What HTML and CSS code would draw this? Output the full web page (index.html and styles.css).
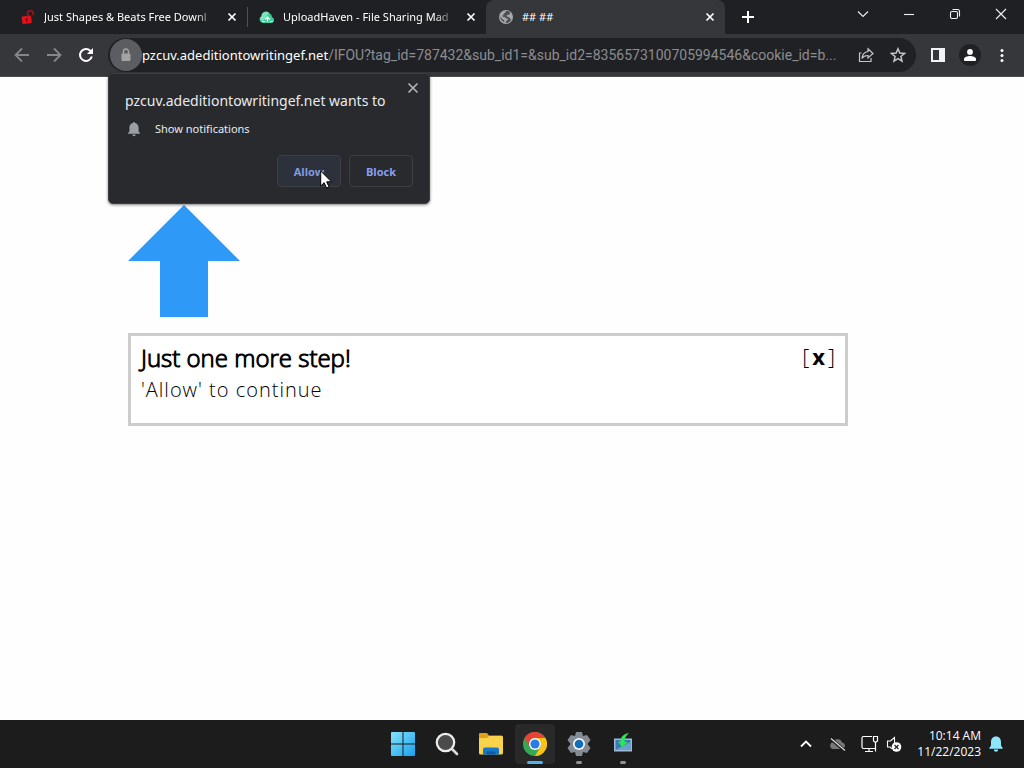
FILE: index.html
```html
<!DOCTYPE html>
<html lang="en">
<head>
<meta charset="utf-8">
<title>## ##</title>
<link rel="stylesheet" href="styles.css">
</head>
<body>
<header class="browser">
  <div class="tabstrip">
    <div class="tab">
      <svg class="favicon" viewBox="0 0 16 16"><g transform="rotate(-8 7 11)"><rect x="2" y="7" width="9.500" height="7.500" rx="1" fill="#e3101b"/><path d="M8.500 8V5a2.700 2.700 0 0 1 5.400 0v2" fill="none" stroke="#a5131b" stroke-width="1.600"/><circle cx="6.700" cy="10.200" r="1.100" fill="#5d070b"/><path d="M6.700 10v2.700" stroke="#5d070b"/></g></svg>
      <span class="tab-title tab-title-faded">Just Shapes &amp; Beats Free Downl</span>
      <button class="tab-close" aria-label="Close tab"><svg viewBox="0 0 16 16"><path d="M4.500 4.500l7 7M11.500 4.500l-7 7"/></svg></button>
    </div>
    <div class="tab tab-divided">
      <svg class="favicon" viewBox="0 0 16 16"><path d="M3.800 14A3.600 3.600 0 0 1 2.500 7.200 4.500 4.500 0 0 1 10.500 4.200 4.300 4.300 0 0 1 13 8 3.200 3.200 0 0 1 13 14Z" fill="#3ecb98"/><path d="M1 10.500a4 4 0 0 1 1.500-3.300A4.500 4.500 0 0 1 10 4L4 12Z" fill="#7fe3bd"/><path d="M8.500 13V8.500M6.200 10.500l2.300-2.500 2.300 2.500M3 12.500h3M11 12.500h3" stroke="#e6fff5" stroke-width="1.200" fill="none"/></svg>
      <span class="tab-title tab-title-faded">UploadHaven - File Sharing Mad</span>
      <button class="tab-close" aria-label="Close tab"><svg viewBox="0 0 16 16"><path d="M4.500 4.500l7 7M11.500 4.500l-7 7"/></svg></button>
    </div>
    <div class="tab tab-active">
      <svg class="favicon" viewBox="0 0 16 16"><circle cx="8" cy="8" r="7" fill="#a6a8ab"/><path d="M9 1.800c-2 .5-1 2-2.600 2.400C5 4.600 6.200 6 4.800 6.500 3.500 7 4.500 8 6 8c2 0 1.400 1.500 3 1.500 1.200 0 1 1.500-.2 2-1 .5-.5 2-1.400 2.600 3 .3 5.200-1.700 6-4-.8.400-1.400-.3-1.700-1.200-.4-1.400-2.500-.4-3-1.600-.4-1.200 1.200-1.400 2.500-1.700.9-.3.400-1.500 1-2.100C11.300 2.500 10.200 1.900 9 1.800ZM2.200 7.500c.1 2.700 1.800 5 4 5.500.5-1.500-.3-2.100-1.300-2.500C3.500 10 3.600 8.200 2.200 7.500Z" fill="#4c4e51"/></svg>
      <span class="tab-title">## ##</span>
      <button class="tab-close" aria-label="Close tab"><svg viewBox="0 0 16 16"><path d="M4.500 4.500l7 7M11.500 4.500l-7 7"/></svg></button>
    </div>
    <button class="new-tab" aria-label="New tab"><svg viewBox="0 0 16 16"><path d="M8 2v12M2 8h12"/></svg></button>
    <div class="window-controls">
      <button aria-label="Search tabs"><svg viewBox="0 0 16 16"><path d="M3 5.500l5 5 5-5"/></svg></button>
      <button aria-label="Minimize"><svg viewBox="0 0 16 16"><path d="M3 8.500h10"/></svg></button>
      <button aria-label="Restore"><svg viewBox="0 0 16 16"><rect x="3.500" y="5.500" width="7" height="7" rx="1.500"/><path d="M5.500 3.500h5a2 2 0 0 1 2 2v5"/></svg></button>
      <button aria-label="Close"><svg viewBox="0 0 16 16"><path d="M3 3l10 10M13 3L3 13"/></svg></button>
    </div>
  </div>
  <div class="toolbar">
    <button class="nav nav-dim" aria-label="Back"><svg viewBox="0 0 16 16"><path d="M15 8H2M8 1.500L1.500 8 8 14.500"/></svg></button>
    <button class="nav nav-dim" aria-label="Forward"><svg viewBox="0 0 16 16"><path d="M1 8h13M8 1.500L14.500 8 8 14.500"/></svg></button>
    <button class="nav" aria-label="Reload"><svg viewBox="0 0 16 16"><path d="M13.800 9.500A6 6 0 1 1 12.200 3.700L14 5.500" stroke-width="2"/><path d="M15 1v6H9Z" fill="currentColor" stroke="none"/></svg></button>
    <div class="omnibox">
      <button class="site-info" aria-label="View site information"><svg viewBox="0 0 16 16"><rect x="3.500" y="6.500" width="9" height="7.500" rx="1"/><path d="M5.500 7V4.500a2.500 2.500 0 0 1 5 0V7" fill="none" stroke="#a2a3a5" stroke-width="1.500"/></svg></button>
      <a class="url" href="#"><span class="host">pzcuv.adeditiontowritingef.net</span><span class="query">/IFOU?tag_id=787432&amp;sub_id1=&amp;sub_id2=8356573100705994546&amp;cookie_id=b...</span></a>
      <button class="omni-action" aria-label="Share"><svg viewBox="0 0 16 16"><path d="M3.500 6H1.500v8.500h11.500V11M10 1.800L15 6.500l-5 4.500V8.500C7.500 8.400 5.500 9.200 4 11.500 4.400 7.500 6.500 5 10 4.500Z" stroke-width="1.200"/></svg></button>
      <button class="omni-action" aria-label="Bookmark this tab"><svg viewBox="0 0 16 16"><path d="M8 1.800l1.800 4.300 4.700.4-3.600 3 1.100 4.600L8 11.700l-4 2.400 1.100-4.600-3.600-3 4.700-.4Z" stroke-width="1.500"/></svg></button>
    </div>
    <button class="side" aria-label="Side panel"><svg viewBox="0 0 16 16"><path d="M1 1h14v14H1ZM3 3v10h6V3Z" fill="#f1f3f4" fill-rule="evenodd"/></svg></button>
    <button class="side profile" aria-label="Profile"><svg viewBox="0 0 16 16"><circle cx="8" cy="4.900" r="2.900" fill="#fff"/><path d="M2 14v-2c0-2 3.500-3 6-3s6 1 6 3v2Z" fill="#fff"/></svg></button>
    <button class="side" aria-label="Menu"><svg viewBox="0 0 16 16"><g fill="#fff"><circle cx="8" cy="3.500" r="1.500"/><circle cx="8" cy="8.500" r="1.500"/><circle cx="8" cy="13.500" r="1.500"/></g></svg></button>
  </div>
  <section class="prompt" role="dialog" aria-labelledby="prompt-title">
    <button class="prompt-close" aria-label="Close"><svg viewBox="0 0 16 16"><path d="M3.500 3.500l9 9M12.500 3.500l-9 9"/></svg></button>
    <h2 id="prompt-title">pzcuv.adeditiontowritingef.net wants to</h2>
    <p class="permission"><svg viewBox="0 0 16 16"><path d="M7 2a1 1 0 0 1 2 0c2.300.5 3.600 2.300 3.600 4.800v3.700L14 12v.8H2V12l1.400-1.500V6.800C3.400 4.300 4.700 2.500 7 2ZM6.300 13.600h3.400a1.700 1.700 0 0 1-3.400 0Z" fill="#9aa0a6"/></svg>Show notifications</p>
    <div class="prompt-actions">
      <button class="allow">Allow</button>
      <button>Block</button>
    </div>
    <svg class="cursor" viewBox="0 0 12 19"><path d="M.7 1v15l3.500-3.300 2.300 5.300 2.500-1.100-2.300-5.100h4.800Z" fill="#fff" stroke="#000" stroke-width="1"/></svg>
  </section>
</header>

<main class="page">
  <svg class="arrow" viewBox="0 0 112 112"><path d="M56 0l56 56H80v56H32V56H0Z" fill="#2f99f8"/></svg>
  <section class="notice">
    <div class="notice-text">
      <h1>Just one more step!</h1>
      <p>'Allow' to continue</p>
    </div>
    <button class="dismiss">[<b>x</b>]</button>
  </section>
</main>

<footer class="taskbar">
  <nav class="apps">
    <button aria-label="Start"><svg viewBox="0 0 24 24"><defs><linearGradient id="win" x1="0" y1="0" x2="24" y2="24" gradientUnits="userSpaceOnUse"><stop stop-color="#86e3fb"/><stop offset="1" stop-color="#16a1ee"/></linearGradient></defs><path d="M0 1q0-1 1-1h10.500v11.500H0ZM12.500 0H23q1 0 1 1v10.500H12.500ZM0 12.500h11.500V24H1q-1 0-1-1ZM12.500 12.500H24V23q0 1-1 1H12.500Z" fill="url(#win)"/></svg></button>
    <button aria-label="Search"><svg viewBox="0 0 24 24"><circle cx="10.500" cy="10.500" r="8.700" fill="#4b4b4b" stroke="#eee" stroke-width="2.200"/><path d="M17 17l5 5" stroke="#ddd" stroke-width="2.600" stroke-linecap="round"/></svg></button>
    <button aria-label="File Explorer"><svg viewBox="0 0 24 24"><path d="M0 2q0-1 1-1h7l2 2.500h12.500Q24 3.500 24 5v5H0Z" fill="#dfa019"/><path d="M0 6h8l2-2h12.500Q24 4 24 5.500V21q0 1.500-1.500 1.500h-21Q0 22.500 0 21Z" fill="#fbd24b"/><path d="M4 22.500v-5q0-2 2-2h12q2 0 2 2v5Z" fill="#1477ca"/><path d="M7.500 22.500v-2q0-1 1-1h7q1 0 1 1v2Z" fill="#0c5ba4"/></svg></button>
    <button class="app-current app-running" aria-label="Google Chrome"><svg viewBox="0 0 24 24"><circle cx="12" cy="12" r="12" fill="#34a853"/><path d="M1.600 6A12 12 0 0 1 22.400 6H12a6 6 0 0 0-5.200 9Z" fill="#ea4335"/><path d="M22.400 6A12 12 0 0 1 12 24l5.200-9a6 6 0 0 0 0-6L12 6Z" fill="#fbc116"/><circle cx="12" cy="12" r="6" fill="#fff"/><circle cx="12" cy="12" r="4.600" fill="#287be8"/></svg></button>
    <button class="app-running" aria-label="Settings"><svg viewBox="0 0 24 24"><path d="M9 0h6l1 4 4-1 3.500 5-3 4 3 4-3.500 5-4-1-1 4H9l-1-4-4 1-3.500-5 3-4-3-4L4 3l4 1Z" fill="#858b92"/><circle cx="12" cy="12" r="6" fill="#f2f7fb"/><circle cx="12" cy="12" r="4.300" fill="#126db8"/></svg></button>
    <button class="app-running" aria-label="Connection"><svg viewBox="0 0 24 24"><path d="M3 6.500h18v13H3Z" fill="#9dbbd6"/><path d="M4.500 8h15v10h-15Z" fill="#3c7ab5"/><path d="M4.500 18l15-8v8Z" fill="#6fa0cd"/><path d="M18 1C11.500 2 9.500 6 9.500 9.500H7l4 5.500 5.500-4.500-3-.7C13.500 6 15 3.500 18 1Z" fill="#2de657"/></svg></button>
  </nav>
  <div class="tray">
    <button aria-label="Show hidden icons"><svg viewBox="0 0 18 18"><path d="M4 11.500L9 6.500l5 5" fill="none" stroke="#fff" stroke-width="1.800"/></svg></button>
    <button aria-label="OneDrive"><svg viewBox="0 0 18 18"><path d="M4 14a3.400 3.400 0 0 1 0-6.700A4.800 4.800 0 0 1 13 7.500 3.400 3.400 0 0 1 14 14Z" fill="#777"/><path d="M1.500 3.500l14 12" stroke="#1c1c1c" stroke-width="3"/><path d="M2 3.500l14 12" stroke="#ddd" stroke-width="1.200"/></svg></button>
    <div class="tray-group">
      <button aria-label="Network"><svg viewBox="0 0 18 18"><path d="M11 1.500H2.500Q1 1.500 1 3v9q0 1.500 1.500 1.500H15M8 13.500v3M4 16.500h8M12.500 1.500h4V6l-2 1.500-2-1.500ZM14.500 7.500v9" fill="none" stroke="#fff" stroke-width="1.200"/></svg></button>
      <button aria-label="Volume"><svg viewBox="0 0 18 18"><path d="M9.500 8V2.500L5.500 6H2.500v6H5l2 1.800" fill="none" stroke="#fff" stroke-width="1.100"/><circle cx="11.500" cy="12" r="4.800" fill="#fff"/><path d="M9.500 10l4 4M13.500 10l-4 4" stroke="#222" stroke-width="1.200"/></svg></button>
    </div>
    <div class="tray-group">
      <div class="clock"><time>10:14 AM</time><time>11/22/2023</time></div>
      <button aria-label="Notifications"><svg viewBox="0 0 18 18"><path d="M9 1.500c-3.500 0-5 2.600-5 5.500v3.500L2.300 13v.8h13.400V13L14 10.500V7c0-2.900-1.500-5.500-5-5.500ZM6.800 14.600h4.400a2.200 2.200 0 0 1-4.400 0Z" fill="#8ee6fa"/></svg></button>
    </div>
  </div>
</footer>
</body>
</html>
```
FILE: styles.css
```css
* {
  box-sizing: border-box;
}

body {
  margin: 0;
  min-height: 100vh;
  display: flex;
  flex-direction: column;
  background: #fefefe;
  font-family: "Open Sans", "Noto Sans", sans-serif;
  font-size: 12px;
  color: #000;
}

button {
  display: flex;
  align-items: center;
  justify-content: center;
  flex: none;
  margin: 0;
  padding: 0;
  border: 0;
  background: none;
  color: inherit;
  font: inherit;
}

h1, h2, p {
  margin: 0;
}

svg {
  display: block;
  flex: none;
}

.browser {
  position: relative;
  color: #fff;
}

.tabstrip {
  display: flex;
  height: 34px;
  padding-left: 8px;
  background: #1f2023;
}

.tab {
  position: relative;
  display: flex;
  align-items: center;
  flex: 0 1 239px;
  min-width: 0;
  gap: 8px;
  padding: 0 7px 0 12px;
}

.tab-divided::before {
  content: "";
  position: absolute;
  left: 0;
  top: 7px;
  height: 20px;
  border-left: 1px solid #505155;
}

.tab-active {
  background: #36373a;
  border-radius: 8px 8px 0 0;
}

.favicon {
  width: 16px;
  height: 16px;
}

.tab-title {
  flex: 1;
  min-width: 0;
  overflow: hidden;
  white-space: nowrap;
  font-family: "Noto Sans", sans-serif;
  font-size: 11px;
  line-height: 18px;
}

.tab-title-faded {
  mask-image: linear-gradient(to right, #000 88%, transparent);
}

.tab-close svg {
  width: 16px;
  height: 16px;
  stroke: #fff;
  stroke-width: 1.7;
}

.new-tab {
  width: 46px;
}

.new-tab svg {
  width: 16px;
  height: 16px;
  stroke: #fff;
  stroke-width: 2;
}

.window-controls {
  display: flex;
  margin-left: auto;
  align-items: center;
  height: 28px;
}

.window-controls button {
  width: 46px;
  height: 28px;
}

.window-controls svg {
  width: 16px;
  height: 16px;
  fill: none;
  stroke: #f1f1f1;
  stroke-width: 1.1;
}

.toolbar {
  display: flex;
  align-items: center;
  height: 43px;
  padding: 0 6px;
  background: #36373a;
  border-bottom: 1px solid #4b4c4e;
}

.nav {
  width: 32px;
  height: 32px;
}

.nav svg {
  width: 16px;
  height: 16px;
  fill: none;
  stroke: currentColor;
  stroke-width: 1.8;
}

.nav-dim {
  color: #85868a;
}

.omnibox {
  display: flex;
  align-items: center;
  flex: 1;
  min-width: 0;
  height: 34px;
  margin: 0 6px;
  padding: 0 2px;
  border-radius: 17px;
  background: #202124;
}

.site-info {
  width: 32px;
  height: 32px;
  border-radius: 50%;
  background: #5c5d60;
}

.site-info svg {
  width: 16px;
  height: 16px;
  fill: #a2a3a5;
}

.url {
  flex: 1;
  min-width: 0;
  overflow: hidden;
  white-space: nowrap;
  text-overflow: ellipsis;
  text-decoration: none;
  color: #8c8d90;
  line-height: 20px;
}

.host {
  color: #fff;
  font-family: "Noto Sans", sans-serif;
  font-size: 13px;
}

.query {
  font-family: Roboto, "Open Sans", sans-serif;
  font-size: 14px;
}

.omni-action {
  width: 32px;
  height: 32px;
}

.omni-action svg {
  width: 16px;
  height: 16px;
  fill: none;
  stroke: #c4c5c8;
}

.side {
  width: 32px;
  height: 32px;
}

.side svg {
  width: 16px;
  height: 16px;
}

.profile svg {
  width: 22px;
  height: 22px;
  padding: 3px;
  border-radius: 50%;
  background: #202124;
}

.prompt {
  position: absolute;
  top: 73px;
  left: 108px;
  width: 322px;
  padding: 16px;
  border: 1px solid #3c3d40;
  border-radius: 5px;
  background: #292a2d;
  box-shadow: 0 1px 3px rgba(0, 0, 0, 0.5);
  color: #e8eaed;
}

.prompt h2 {
  font-family: "Noto Sans", sans-serif;
  font-size: 14px;
  font-weight: 400;
  line-height: 22px;
}

.prompt-close {
  position: absolute;
  top: 6px;
  right: 8px;
}

.prompt-close svg {
  width: 16px;
  height: 16px;
  stroke: #b0b2b5;
  stroke-width: 1.7;
}

.permission {
  display: flex;
  align-items: center;
  gap: 13px;
  margin-top: 8px;
  padding-left: 1px;
  font-family: "Noto Sans", sans-serif;
  font-size: 11px;
  line-height: 18px;
}

.permission svg {
  width: 16px;
  height: 16px;
}

.prompt-actions {
  display: flex;
  justify-content: flex-end;
  gap: 8px;
  margin-top: 17px;
}

.prompt-actions button {
  width: 64px;
  height: 32px;
  border: 1px solid #3c3f44;
  border-radius: 4px;
  color: #8c9ef0;
  font-size: 11px;
  font-weight: 700;
}

.prompt-actions .allow {
  background: #2c313b;
  color: #839bdf;
}

.cursor {
  position: absolute;
  left: 211px;
  top: 96px;
  width: 12px;
  height: 19px;
}

.page {
  flex: 1;
  width: 100%;
  max-width: 976px;
  padding: 128px 128px 32px;
}

.arrow {
  width: 112px;
  height: 112px;
}

.notice {
  display: flex;
  align-items: flex-start;
  justify-content: space-between;
  margin-top: 16px;
  padding: 6px 10px 17px;
  border: 3px solid #ccc;
  background: #fff;
}

.notice h1 {
  font-size: 24px;
  font-weight: 300;
  line-height: 32px;
  -webkit-text-stroke: 1px #000;
}

.notice p {
  font-size: 20px;
  font-weight: 300;
  line-height: 32px;
  letter-spacing: 1px;
}

.dismiss {
  gap: 3px;
  font-size: 22px;
  font-weight: 300;
  line-height: 28px;
}

.dismiss b {
  font-weight: 700;
}

.taskbar {
  display: grid;
  grid-template-columns: 1fr auto 1fr;
  height: 48px;
  padding-left: 2px;
  background: #1c1c1c;
  color: #fff;
}

.apps {
  grid-column: 2;
  display: flex;
  align-items: center;
  gap: 4px;
}

.apps button {
  position: relative;
  width: 40px;
  height: 40px;
  border-radius: 4px;
}

.apps svg {
  width: 24px;
  height: 24px;
}

.apps .app-current {
  background: #292929;
}

.app-running::after {
  content: "";
  position: absolute;
  bottom: 0;
  left: 17px;
  width: 6px;
  height: 3px;
  border-radius: 2px;
  background: #929292;
}

.app-current::after {
  left: 12px;
  width: 16px;
  background: #4cb5ec;
}

.tray {
  display: flex;
  align-items: center;
  justify-content: flex-end;
  gap: 14px;
  padding-right: 19px;
}

.tray-group {
  display: flex;
  align-items: center;
  gap: 6px;
}

.tray svg {
  width: 18px;
  height: 18px;
}

.clock {
  display: flex;
  flex-direction: column;
  align-items: flex-end;
  font-size: 12px;
  line-height: 16px;
}
```
